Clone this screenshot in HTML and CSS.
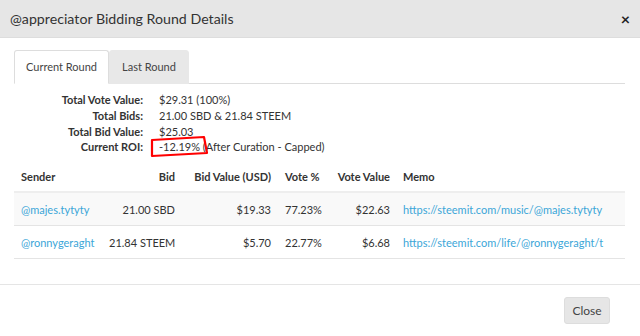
FILE: index.html
```html
<!DOCTYPE html>
<html lang="en">

<head>
    <meta charset="UTF-8">
    <meta name="viewport" content="width=device-width, initial-scale=1.0">
    <title>Bidding Round Details</title>
    <link rel="stylesheet" href="styles.css">
</head>

<body>
    <div class="modal">
        <header class="modal-header">
            <h4>@appreciator Bidding Round Details</h4>
            <span class="close-x">&times;</span>
        </header>

        <div class="modal-body">
            <ul class="tabs">
                <li class="tab active">Current Round</li>
                <li class="tab">Last Round</li>
            </ul>

            <div class="stats">
                <span class="label">Total Vote Value:</span>
                <span>$29.31 (100%)</span>
                <span class="label">Total Bids:</span>
                <span>21.00 SBD &amp; 21.84 STEEM</span>
                <span class="label">Total Bid Value:</span>
                <span>$25.03</span>
                <span class="label">Current ROI:</span>
                <span class="roi">-12.19% (After Curation - Capped)
                    <svg class="scribble" width="60" height="26" viewBox="0 0 60 26">
                        <path d="M3 6 L55 3 L58 19 L3 22 Z" fill="none" stroke="#f00" stroke-width="2.2" stroke-linejoin="round" />
                    </svg>
                </span>
            </div>

            <table class="bids">
                <colgroup>
                    <col style="width:88px">
                    <col style="width:80px">
                    <col style="width:96px">
                    <col style="width:52px">
                    <col style="width:67px">
                    <col>
                </colgroup>
                <thead>
                    <tr>
                        <th>Sender</th>
                        <th class="num">Bid</th>
                        <th class="num">Bid Value (USD)</th>
                        <th>Vote %</th>
                        <th class="num">Vote Value</th>
                        <th class="memo">Memo</th>
                    </tr>
                </thead>
                <tbody>
                    <tr class="odd">
                        <td><a href="#">@majes.tytyty</a></td>
                        <td class="num">21.00 SBD</td>
                        <td class="num">$19.33</td>
                        <td>77.23%</td>
                        <td class="num">$22.63</td>
                        <td class="memo"><a href="#">https://steemit.com/music/@majes.tytyty</a></td>
                    </tr>
                    <tr>
                        <td><a href="#">@ronnygeraght</a></td>
                        <td class="num">21.84 STEEM</td>
                        <td class="num">$5.70</td>
                        <td>22.77%</td>
                        <td class="num">$6.68</td>
                        <td class="memo"><a href="#">https://steemit.com/life/@ronnygeraght/t</a></td>
                    </tr>
                </tbody>
            </table>
        </div>

        <footer class="modal-footer">
            <button class="btn-close">Close</button>
        </footer>
    </div>
</body>

</html>
```

FILE: styles.css
```css
body {
    margin: 0;
    font-family: Lato, "Open Sans", sans-serif;
    font-size: 11px;
    color: #333;
    background: #fff;
}

.modal {
    width: 640px;
    height: 336px;
    display: flex;
    flex-direction: column;
}

.modal-header {
    height: 38px;
    background-color: #e6e6e6;
    border-bottom: 1px solid #ddd;
    box-sizing: border-box;
    display: flex;
    align-items: center;
    justify-content: space-between;
    padding: 0 10px;
}

.modal-header h4 {
    margin: 0;
    font-size: 14.2px;
    font-weight: 400;
    color: #333;
}

.close-x {
    font-size: 16px;
    font-weight: 700;
    color: #222;
}

.modal-body {
    flex: 1;
    padding: 12px 15px 0 14px;
}

.tabs {
    list-style: none;
    margin: 0;
    padding: 0;
    display: flex;
    border-bottom: 1px solid #ddd;
}

.tab {
    height: 32px;
    line-height: 32px;
    padding: 0 11px;
    margin-bottom: -1px;
    background-color: #e8e8e8;
    border: 1px solid #e8e8e8;
    border-radius: 3px 3px 0 0;
    color: #444;
}

.tab.active {
    background-color: #fff;
    border-color: #ddd #ddd #fff;
}

.tab + .tab {
    padding: 0 12px;
}

.stats {
    display: grid;
    grid-template-columns: 129px auto;
    column-gap: 16px;
    margin-top: 8px;
    line-height: 15.8px;
}

.stats .label {
    text-align: right;
    font-weight: 700;
    color: #333;
}

.roi {
    position: relative;
}

.scribble {
    position: absolute;
    left: -10px;
    top: -5px;
}

.bids {
    width: 611px;
    margin-top: 6px;
    border-collapse: collapse;
    table-layout: fixed;
}

.bids th,
.bids td {
    padding: 0 7px;
    text-align: left;
    white-space: nowrap;
    overflow: hidden;
}

.bids th {
    height: 30px;
    font-weight: 700;
    border-bottom: 2px solid #eee;
}

.bids td {
    height: 32px;
    border-bottom: 1px solid #e4e4e4;
}

.bids .num {
    text-align: right;
}

.bids .memo {
    padding-left: 6px;
    padding-right: 0;
}

.bids tr.odd td {
    background-color: #f9f9f9;
}

.bids a {
    color: #3ba6d8;
    text-decoration: none;
}

.modal-footer {
    border-top: 1px solid #e5e5e5;
    height: 51px;
    display: flex;
    justify-content: flex-end;
    align-items: center;
    padding: 0 30px 0 0;
}

.btn-close {
    font-family: Lato, "Open Sans", sans-serif;
    font-size: 12px;
    color: #444;
    background-color: #e6e6e6;
    border: 1px solid #ddd;
    border-radius: 3px;
    width: 46px;
    height: 27px;
    padding: 0;
}
```
